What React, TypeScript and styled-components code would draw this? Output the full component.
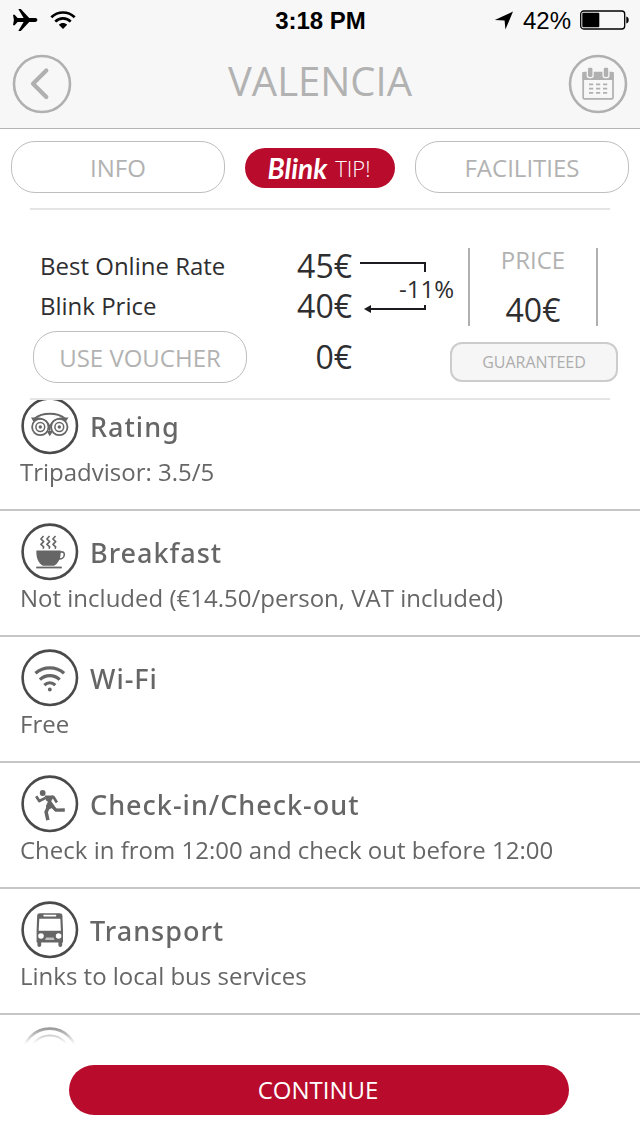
import React from "react";
import styled, { createGlobalStyle } from "styled-components";

const crimson = "#b90c2c";
const muted = "#b2b2b2";
const ink = "#2e2e30";
const slate = "#666666";

const GlobalStyle = createGlobalStyle`
  *, *::before, *::after { box-sizing: border-box; }
  body {
    margin: 0;
    background: #ffffff;
    font-family: "Open Sans", "Noto Sans", sans-serif;
  }
  button { font-family: inherit; cursor: pointer; }
  h1, h2, p { margin: 0; }
`;

const Screen = styled.div`
  display: flex;
  flex-direction: column;
  height: 100vh;
  overflow: hidden;
`;

const Header = styled.header`
  flex: none;
  background: #f7f7f7;
  border-bottom: 1px solid #b4b4b4;
`;

const StatusBar = styled.div`
  display: grid;
  grid-template-columns: 1fr auto 1fr;
  align-items: center;
  height: 40px;
  padding: 0 11px 0 12px;
  color: #000000;
  font-family: "Liberation Sans", Arial, sans-serif;
  font-size: 24px;
  line-height: 28px;
`;

const StatusGroup = styled.div<{ $end?: boolean }>`
  display: flex;
  align-items: center;
  justify-content: ${(p) => (p.$end ? "flex-end" : "flex-start")};
  gap: ${(p) => (p.$end ? "9px" : "12px")};
`;

const Clock = styled.time`
  padding-top: 2px;
  font-weight: 700;
`;

const BatteryLevel = styled.span`
  padding-top: 2px;
`;

const NavBar = styled.nav`
  display: flex;
  align-items: center;
  justify-content: space-between;
  height: 88px;
  padding: 0 12px;
`;

const Title = styled.h1`
  padding-bottom: 6px;
  color: ${muted};
  font-size: 40px;
  font-weight: 400;
  line-height: 56px;
`;

const RoundButton = styled.button`
  display: flex;
  padding: 0;
  border: 0;
  background: none;
  color: #b0b0b0;
`;

const Tabs = styled.div`
  display: flex;
  flex: none;
  align-items: center;
  gap: 20px;
  padding: 12px 11px 15px;
`;

const PillButton = styled.button<{ $wide?: boolean }>`
  flex: ${(p) => (p.$wide ? "1 1 0" : "0 0 214px")};
  height: 52px;
  padding: 2px 0 0;
  border: 1px solid #bebebe;
  border-radius: 24px;
  background: #ffffff;
  color: ${muted};
  font-size: 24px;
  line-height: 32px;
`;

const TipButton = styled.button`
  display: flex;
  flex: 0 0 150px;
  align-items: center;
  justify-content: center;
  gap: 8px;
  height: 40px;
  margin-top: 2px;
  padding: 0 2px 0 0;
  border: 0;
  border-radius: 20px;
  background: ${crimson};
  color: #ffffff;
`;

const TipBrand = styled.span`
  font-family: Lato, sans-serif;
  font-size: 28px;
  font-style: italic;
  font-weight: 700;
  line-height: 32px;
`;

const TipWord = styled.span`
  font-size: 22px;
  font-weight: 300;
  line-height: 32px;
`;

const Divider = styled.hr`
  flex: none;
  height: 2px;
  margin: 0 30px;
  border: 0;
  background: #e4e4e4;
`;

const Summary = styled.section`
  flex: none;
  padding: 36px 0 15px;
  color: ${ink};
`;

const RateArea = styled.div`
  display: flex;
  gap: 8px;
  padding: 0 42px 0 40px;
`;

const Rates = styled.div`
  width: 312px;
`;

const RateLine = styled.div`
  display: flex;
  align-items: center;
  justify-content: space-between;
  height: 40px;
`;

const RateLabel = styled.span`
  font-size: 24px;
  line-height: 32px;
`;

const Amount = styled.span`
  font-size: 32px;
  line-height: 40px;
`;

const Discount = styled.div`
  display: flex;
  flex-direction: column;
  width: 94px;
  padding-top: 15px;
`;

const DiscountValue = styled.span`
  font-size: 24px;
  line-height: 32px;
  text-align: right;
`;

const PriceBox = styled.div`
  display: flex;
  flex-direction: column;
  align-items: center;
  justify-content: space-between;
  width: 130px;
  height: 78px;
  margin: 2px 0 0 auto;
  border: solid #b0b0b0;
  border-width: 0 2px;
`;

const PriceCaption = styled.span`
  color: ${muted};
  font-size: 24px;
  line-height: 24px;
`;

const PriceAmount = styled.span`
  font-size: 32px;
  line-height: 32px;
`;

const VoucherArea = styled.div`
  display: flex;
  align-items: center;
  justify-content: space-between;
  margin-top: 5px;
  padding: 0 22px 0 33px;
`;

const Voucher = styled.div`
  display: flex;
  align-items: center;
  justify-content: space-between;
  width: 319px;
`;

const Guaranteed = styled.span`
  align-self: flex-end;
  width: 168px;
  margin-bottom: 1px;
  border: 2px solid #cccccc;
  border-radius: 12px;
  background: #f6f6f6;
  color: #adadad;
  font-size: 16px;
  line-height: 36px;
  text-align: center;
`;

const ListViewport = styled.main`
  flex: 1 1 0;
  min-height: 0;
  overflow: hidden;
  mask-image: linear-gradient(
    to bottom,
    #000 calc(100% - 42px),
    transparent calc(100% - 14px)
  );
`;

const List = styled.ul`
  margin: -15px 0 0;
  padding: 0;
  list-style: none;
`;

const Item = styled.li`
  padding: 11px 20px 21px;
  border-bottom: 2px solid #c6c6c6;
  color: ${slate};
`;

const ItemHead = styled.div`
  display: flex;
  align-items: center;
  gap: 10px;
  height: 60px;
`;

const ItemTitle = styled.h2`
  padding-top: 2px;
  font-family: "Noto Sans", "Open Sans", sans-serif;
  font-size: 27px;
  font-weight: 500;
  letter-spacing: 1px;
  line-height: 36px;
`;

const ItemText = styled.p`
  font-size: 24px;
  line-height: 32px;
`;

const Footer = styled.footer`
  flex: none;
  padding: 7px 71px 21px 69px;
`;

const ContinueButton = styled.button`
  display: block;
  width: 100%;
  height: 50px;
  padding: 0 2px 0 0;
  border: 0;
  border-radius: 25px;
  background: ${crimson};
  color: #ffffff;
  font-size: 24px;
  line-height: 32px;
`;

const Badge = ({ children }: { children: React.ReactNode }) => (
  <svg width="60" height="58" viewBox="0 0 60 58" fill="none" aria-hidden="true">
    <circle cx="29.8" cy="28.8" r="27.2" stroke="#4a4a4a" strokeWidth="2.6" />
    {children}
  </svg>
);

const OwlIcon = () => (
  <Badge>
    <g stroke={slate} strokeWidth="1.8">
      <circle cx="20.300" cy="30" r="8.200" />
      <circle cx="39.300" cy="30" r="8.200" />
      <circle cx="20.300" cy="30" r="4.400" strokeWidth="1.500" />
      <circle cx="39.300" cy="30" r="4.400" strokeWidth="1.500" />
      <path d="M15 21.300C22 15.200 37.600 15.200 44.600 21.300" strokeWidth="2" />
    </g>
    <g fill={slate}>
      <circle cx="20.300" cy="30" r="1.700" />
      <circle cx="39.300" cy="30" r="1.700" />
      <path d="M11 20.600h7.800c5 .6 9.400 3.600 11 7.400 1.600-3.800 6-6.800 11-7.400h7.800l-2.700 4-1.300-.9c-5-3.200-12-1.100-13.700 4.600L29.800 38 28.300 28.300c-1.700-5.700-8.700-7.800-13.700-4.600l-1.300.9z" />
      <path d="M26.500 34h6.600l-3.300 5.200z" />
    </g>
  </Badge>
);

const CupIcon = () => (
  <Badge>
    <path
      d="M23.500 13l-2.600 3 2.800 2.700-2.800 2.700 2.800 2.400-.6 2M29.500 13l-2.600 3 2.800 2.700-2.800 2.700 2.800 2.400-.6 2M35.500 13l-2.600 3 2.800 2.700-2.800 2.700 2.800 2.400-.6 2"
      stroke={slate}
      strokeWidth="1.600"
      strokeLinejoin="round"
    />
    <path d="M16.400 27.400h24.300c.4 7.600-2.200 12.600-6.700 15.400H23c-4.600-2.800-7-7.800-6.600-15.400z" fill={slate} />
    <path d="M40 29.200c2.800-.9 4.600.2 4.300 2.800-.3 2.500-2.700 4.200-5.500 4" stroke={slate} strokeWidth="1.600" />
    <path d="M16.200 44.500h25.600" stroke={slate} strokeWidth="1.800" />
  </Badge>
);

const WifiIcon = () => (
  <Badge>
    <g stroke={slate} strokeWidth="3.200">
      <path d="M15.500 24.300c8-7.300 20.600-7.300 28.600 0" />
      <path d="M19.900 30.600c5.600-5.400 14.200-5.400 19.800 0" />
      <path d="M24.300 36.200c3.200-3 7.800-3 11 0" />
    </g>
    <circle cx="29.800" cy="40.500" r="1.900" fill={slate} />
  </Badge>
);

const RunnerIcon = () => (
  <Badge>
    <circle cx="22.700" cy="18" r="2.900" fill={slate} />
    <path d="M24.600 20.600h8l.8 2-2.200 3.600 3.600 5-4.300 2.600-3.600 1-1-3.800 2-4.200-1.800-1.200z" fill={slate} />
    <g stroke={slate} strokeLinejoin="round">
      <path d="M16.200 21.300l3.100 4.700 6.300-3.100" strokeWidth="2.700" />
      <path d="M31.500 21.500l2 .6 3.400 5.300" strokeWidth="2.700" />
      <path d="M31.500 30.500l4.500 4.600 8.800-.1" strokeWidth="3.400" />
      <path d="M28.200 32.500l-2.100 4.600 1.800 8" strokeWidth="3.500" />
    </g>
  </Badge>
);

const BusIcon = () => (
  <Badge>
    <path
      d="M20 12.200h19.600c1.700 0 2.600.8 2.800 2.400l.6 14.400v12.500h-.8V44c0 2.600-3.800 2.600-3.800 0v-2.500H21.200V44c0 2.600-3.800 2.600-3.800 0v-2.500h-.8V29l.6-14.400c.2-1.600 1.100-2.400 2.800-2.400z"
      fill={slate}
    />
    <path d="M19.300 17.700h21l.6 12H18.700z" fill="#ffffff" />
    <rect x="23.300" y="13.800" width="13" height="1.700" rx="0.800" fill="#ffffff" />
    <circle cx="21" cy="35" r="2.800" fill="#ffffff" />
    <circle cx="38.600" cy="35" r="2.800" fill="#ffffff" />
    <path d="M26 36.400h7.600l.9 2.600h-9.400z" fill="#c2c2c2" />
  </Badge>
);

const RingIcon = () => (
  <Badge>
    <circle cx="29.800" cy="29" r="20.500" stroke={slate} strokeWidth="2" />
  </Badge>
);

const BackIcon = () => (
  <svg width="60" height="60" viewBox="0 0 60 60" fill="none" stroke="currentColor" aria-hidden="true">
    <circle cx="30" cy="30" r="28" strokeWidth="2.600" />
    <path d="M34.300 16.500L21 29.700l13.300 13.200" strokeWidth="4.200" strokeLinecap="round" strokeLinejoin="round" />
  </svg>
);

const CalendarIcon = () => (
  <svg width="60" height="60" viewBox="0 0 60 60" fill="none" aria-hidden="true">
    <circle cx="30" cy="30" r="28" stroke="currentColor" strokeWidth="2.600" />
    <rect x="15.200" y="18.700" width="29.800" height="26.200" rx="1.200" stroke="currentColor" strokeWidth="1.700" />
    <path d="M14.400 18h31.200v8H14.400z" fill="currentColor" />
    <g fill="currentColor" stroke="#f7f7f7" strokeWidth="1.300">
      <rect x="19.300" y="13" width="5.800" height="10.600" rx="2" />
      <rect x="35.100" y="13" width="5.800" height="10.600" rx="2" />
    </g>
    <path
      d="M21 30.300h4.200M28 30.300h4.200M35 30.300h4.200M21 34.600h4.200M28 34.600h4.200M35 34.600h4.200M21 38.900h4.200M28 38.900h4.200M35 38.900h4.200"
      stroke="currentColor"
      strokeWidth="1.800"
    />
  </svg>
);

const AirplaneIcon = () => (
  <svg width="26" height="24" viewBox="0 0 26 24" aria-hidden="true">
    <path d="M1 6.700h1.600l3 3.400h6L6.300 1.100h2.500l8.400 9h6.300c2.500.2 2.500 3.600 0 3.800h-6.300l-8.400 9H6.300l5.300-9h-6l-3 3.400H1l.9-5.300z" />
  </svg>
);

const SignalIcon = () => (
  <svg width="26" height="20" viewBox="0 0 26 20" fill="none" stroke="#000000" strokeWidth="2.700" aria-hidden="true">
    <path d="M1.300 7.300c6.600-6.400 16.800-6.400 23.400 0" />
    <path d="M5.300 11.600c4.300-4.200 11.100-4.200 15.400 0" />
    <path d="M8.800 14.700c2.400-2.300 6-2.300 8.400 0L13 19z" fill="#000000" stroke="none" />
  </svg>
);

const LocationIcon = () => (
  <svg width="20" height="19" viewBox="0 0 20 19" aria-hidden="true">
    <path d="M19 .6L11.400 18.600l-.8-9.200L.800 9z" />
  </svg>
);

const BatteryIcon = () => (
  <svg width="49" height="20" viewBox="0 0 49 20" fill="none" aria-hidden="true">
    <rect x="0.700" y="1" width="44" height="18" rx="3" stroke="#000000" strokeWidth="1.300" />
    <rect x="2.300" y="2.700" width="17" height="14.600" rx="1" fill="#000000" />
    <path d="M46.300 6.500c3.200.5 3.200 6.500 0 7z" fill="#000000" />
  </svg>
);

const FromLine = () => (
  <svg width="94" height="12" viewBox="0 0 94 12" fill="none" aria-hidden="true">
    <path d="M0 2h65v9" stroke="#1c1c20" strokeWidth="2" />
  </svg>
);

const ToArrow = () => (
  <svg width="94" height="10" viewBox="0 0 94 10" aria-hidden="true">
    <path d="M65 -1v5H9" fill="none" stroke="#1c1c20" strokeWidth="2" />
    <path d="M4 4l7-4v8z" fill="#1c1c20" />
  </svg>
);

const facilities = [
  { title: "Rating", text: "Tripadvisor: 3.5/5", Icon: OwlIcon },
  { title: "Breakfast", text: "Not included (€14.50/person, VAT included)", Icon: CupIcon },
  { title: "Wi-Fi", text: "Free", Icon: WifiIcon },
  { title: "Check-in/Check-out", text: "Check in from 12:00 and check out before 12:00", Icon: RunnerIcon },
  { title: "Transport", text: "Links to local bus services", Icon: BusIcon },
];

export default function App() {
  return (
    <Screen>
      <GlobalStyle />
      <Header>
        <StatusBar>
          <StatusGroup>
            <AirplaneIcon />
            <SignalIcon />
          </StatusGroup>
          <Clock>3:18 PM</Clock>
          <StatusGroup $end>
            <LocationIcon />
            <BatteryLevel>42%</BatteryLevel>
            <BatteryIcon />
          </StatusGroup>
        </StatusBar>
        <NavBar>
          <RoundButton type="button" aria-label="Back">
            <BackIcon />
          </RoundButton>
          <Title>VALENCIA</Title>
          <RoundButton type="button" aria-label="Calendar">
            <CalendarIcon />
          </RoundButton>
        </NavBar>
      </Header>

      <Tabs>
        <PillButton type="button" $wide>INFO</PillButton>
        <TipButton type="button">
          <TipBrand>Blink</TipBrand>
          <TipWord>TIP!</TipWord>
        </TipButton>
        <PillButton type="button" $wide>FACILITIES</PillButton>
      </Tabs>
      <Divider />

      <Summary>
        <RateArea>
          <Rates>
            <RateLine>
              <RateLabel>Best Online Rate</RateLabel>
              <Amount>45€</Amount>
            </RateLine>
            <RateLine>
              <RateLabel>Blink Price</RateLabel>
              <Amount>40€</Amount>
            </RateLine>
          </Rates>
          <Discount>
            <FromLine />
            <DiscountValue>-11%</DiscountValue>
            <ToArrow />
          </Discount>
          <PriceBox>
            <PriceCaption>PRICE</PriceCaption>
            <PriceAmount>40€</PriceAmount>
          </PriceBox>
        </RateArea>
        <VoucherArea>
          <Voucher>
            <PillButton type="button">USE VOUCHER</PillButton>
            <Amount>0€</Amount>
          </Voucher>
          <Guaranteed>GUARANTEED</Guaranteed>
        </VoucherArea>
      </Summary>
      <Divider />

      <ListViewport>
        <List>
          {facilities.map(({ title, text, Icon }) => (
            <Item key={title}>
              <ItemHead>
                <Icon />
                <ItemTitle>{title}</ItemTitle>
              </ItemHead>
              <ItemText>{text}</ItemText>
            </Item>
          ))}
          <Item>
            <ItemHead>
              <RingIcon />
            </ItemHead>
          </Item>
        </List>
      </ListViewport>

      <Footer>
        <ContinueButton type="button">CONTINUE</ContinueButton>
      </Footer>
    </Screen>
  );
}
